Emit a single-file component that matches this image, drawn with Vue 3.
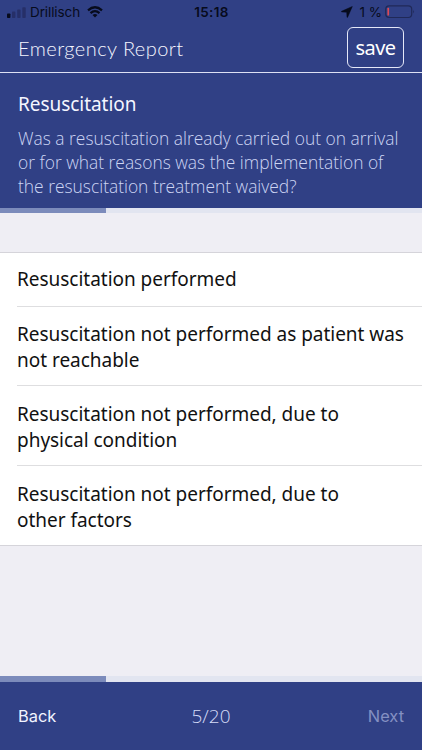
<script setup>
import { ref, computed } from 'vue'

const step = ref(5)
const total = 20
const progress = computed(() => `${(step.value / total) * 100}%`)
const options = [
  ['Resuscitation performed'],
  ['Resuscitation not performed as patient was', 'not reachable'],
  ['Resuscitation not performed, due to', 'physical condition'],
  ['Resuscitation not performed, due to', 'other factors'],
]
const question = [
  'Was a resuscitation already carried out on arrival',
  'or for what reasons was the implementation of',
  'the resuscitation treatment waived?',
]
</script>

<template>
  <div class="screen">
    <div class="status">
      <div class="side">
        <svg class="signal" width="19" height="11" viewBox="0 0 19 11">
          <rect x="0" y="6.5" width="3.4" height="4.5" rx="0.8" fill="#070b1c" />
          <g fill="#262f68">
            <rect x="5" y="4.6" width="3.4" height="6.4" rx="0.8" />
            <rect x="10.2" y="2.6" width="3.4" height="8.4" rx="0.8" />
            <rect x="15.3" y="0.3" width="3.4" height="10.7" rx="0.8" />
          </g>
        </svg>
        <span class="carrier">Drillisch</span>
        <svg class="wifi" width="16" height="12" viewBox="0 0 16 12" fill="none" stroke="#070b1c" stroke-width="2.2">
          <path d="M1 4.4Q8 -1.9 15 4.4" />
          <path d="M3.5 7.1Q8 3.2 12.5 7.1" />
          <path d="M5.5 9Q8 6.8 10.5 9L8 11.6Z" fill="#070b1c" stroke="none" />
        </svg>
      </div>
      <span class="time">15:18</span>
      <div class="side right">
        <svg class="arrow" width="12" height="12" viewBox="0 0 12 12">
          <path d="M11.3 .5L.5 5.3Q.2 5.8 .8 5.9L5.7 6.2L6 11.1Q6.2 11.7 6.6 11.2Z" fill="#070b1c" stroke="#070b1c" stroke-width="0.5" />
        </svg>
        <span class="percent">1 %</span>
        <svg class="battery" width="31" height="14" viewBox="0 0 31 14">
          <rect x="0.7" y="0.9" width="26" height="11.6" rx="3.4" fill="none" stroke="#202958" stroke-width="1.2" />
          <rect x="2.4" y="2.8" width="1.7" height="7.8" rx="0.7" fill="#dc4a55" />
          <path d="M28.2 4.8Q30 6.7 28.2 8.6Z" fill="#202958" />
        </svg>
      </div>
    </div>

    <header class="titlebar">
      <h1>Emergency Report</h1>
      <button class="save">save</button>
    </header>

    <section class="question">
      <h2>Resuscitation</h2>
      <p><span v-for="line in question" :key="line">{{ line }}</span></p>
    </section>
    <div class="track"><div class="fill" :style="{ width: progress }"></div></div>

    <ul class="options">
      <li v-for="(option, i) in options" :key="i">
        <span v-for="line in option" :key="line">{{ line }}</span>
      </li>
    </ul>

    <div class="track bottom"><div class="fill" :style="{ width: progress }"></div></div>
    <footer>
      <button class="nav">Back</button>
      <span class="count">{{ step }}/{{ total }}</span>
      <button class="nav next" disabled>Next</button>
    </footer>
  </div>
</template>

<style>
body { margin: 0; }
</style>

<style scoped>
* { box-sizing: border-box; }
.screen {
  width: 422px;
  height: 750px;
  display: flex;
  flex-direction: column;
  overflow: hidden;
  background: #efeef4;
  font-family: "Noto Sans", sans-serif;
  white-space: nowrap;
}
button {
  background: none;
  border: 0;
  padding: 0;
  font: inherit;
}
.status {
  height: 24px;
  flex: none;
  display: grid;
  grid-template-columns: 1fr auto 1fr;
  align-items: center;
  padding: 0 6px 0 7px;
  background: #304085;
  color: #070b1c;
  font: 400 13.5px/24px Inter, sans-serif;
}
.side { display: flex; align-items: center; }
.right { justify-content: flex-end; }
.carrier { margin-left: 4px; letter-spacing: -0.1px; }
.wifi { margin-left: 7px; }
.time { font-weight: 600; letter-spacing: 0.3px; }
.percent { margin: 0 3px 0 6px; }
.titlebar {
  height: 49px;
  flex: none;
  display: flex;
  justify-content: space-between;
  align-items: flex-start;
  padding: 3px 18px 0;
  background: #304085;
  border-bottom: 1.5px solid #dde1f4;
}
h1 {
  margin: 0;
  color: #f5f6ff;
  font: 300 20px/42px Lato, sans-serif;
  letter-spacing: 0.45px;
}
.save {
  width: 57px;
  height: 41px;
  border: 1.5px solid #e5e8f8;
  border-radius: 6px;
  color: #fff;
  font-size: 20px;
  letter-spacing: -0.5px;
  line-height: 36px;
}
.question {
  height: 135px;
  flex: none;
  padding: 18px 18px 0;
  background: #304085;
}
h2 {
  margin: 0;
  color: #f5f6ff;
  font-size: 19px;
  font-weight: 400;
  letter-spacing: -0.05px;
  line-height: 27px;
}
p {
  margin: 9px 0 0;
  color: #cdd5f4;
  font: 300 17.4px/23.8px "Open Sans", sans-serif;
}
p span, li span { display: block; width: max-content; }
.track {
  height: 5px;
  flex: none;
  background: #e2e5f0;
}
.track.bottom { height: 6px; margin-top: auto; }
.fill { height: 100%; background: #7c8bbb; }
.options {
  flex: none;
  margin: 39px 0 0;
  padding: 0 0 0 17px;
  list-style: none;
  background: #fff;
  border-top: 1px solid #d5d4da;
  border-bottom: 1px solid #d5d4da;
  color: #111;
  font-size: 19px;
  letter-spacing: -0.025px;
  line-height: 26px;
}
li { height: 80px; padding-top: 15px; border-bottom: 1px solid #dedee0; }
li:first-child { height: 54px; padding-top: 13px; }
li:nth-child(2) { height: 79px; padding-top: 14px; }
li:last-child { height: 79px; border-bottom: 0; }
footer {
  height: 68px;
  flex: none;
  display: grid;
  grid-template-columns: 1fr auto 1fr;
  align-items: center;
  padding: 0 18px;
  background: #304085;
}
.nav { justify-self: start; color: #f2f4ff; font: 400 16.4px/24px Inter, sans-serif; }
.next { justify-self: end; color: #8490c2; }
.count { color: #d5dcf8; font: 300 19px/26px "Open Sans", sans-serif; }
</style>
